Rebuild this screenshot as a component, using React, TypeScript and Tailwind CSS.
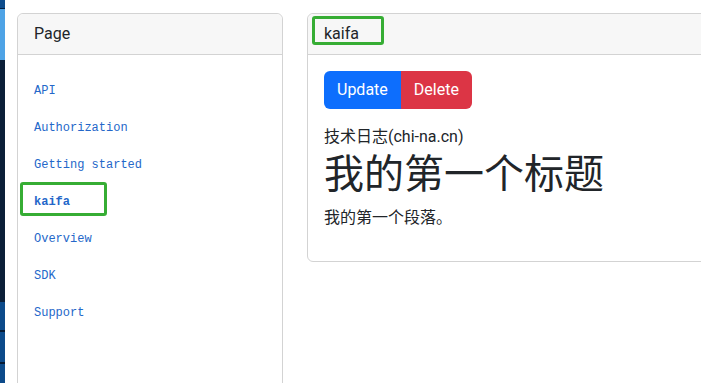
import React from "react";

const links = ["API", "Authorization", "Getting started", "kaifa", "Overview", "SDK", "Support"];

export default function App() {
  return (
    <div
      className="flex h-[383px] w-[701px] overflow-hidden bg-white text-[#212529]"
      style={{ fontFamily: 'Roboto, "Noto Sans CJK SC", sans-serif' }}
    >
      <div className="flex w-[5px] shrink-0 flex-col">
        <div className="h-[8px] bg-[#0d4c8c]" />
        <div className="h-[1px] bg-[#062040]" />
        <div className="h-[51px] bg-[#4ea3e6]" />
        <div className="h-[242px] bg-[#0b1f38]" />
        <div className="h-[28px] bg-[#0c4a8a]" />
        <div className="h-[2px] bg-[#061a33]" />
        <div className="h-[30px] bg-[#0c4a8a]" />
        <div className="h-[2px] bg-[#061a33]" />
        <div className="flex-1 bg-[#0c4a8a]" />
      </div>
      <div className="flex flex-1 gap-[24px] pl-[12px] pt-[13px]">
        <div className="relative w-[266px] shrink-0 self-start h-[420px] rounded-[6px] border border-[#d3d3d3]">
          <div className="rounded-t-[6px] border-b border-[#d3d3d3] bg-[#f7f7f7] px-[16px] py-[8px] text-[16px] leading-[24px]">
            Page
          </div>
          <div className="flex flex-col px-[16px] pt-[17px]">
            {links.map((l) => (
              <div
                key={l}
                className={`flex h-[37px] items-center text-[12px] text-[#2467c9] ${l === "kaifa" ? "font-bold" : ""}`}
                style={{ fontFamily: '"Liberation Mono", monospace' }}
              >
                {l}
              </div>
            ))}
          </div>
          <div className="absolute left-[2px] top-[168px] h-[34px] w-[87px] rounded-[3px] border-[3px] border-[#36ad34]" />
        </div>
        <div className="relative w-[420px] shrink-0 self-start rounded-[6px] border border-[#d3d3d3]">
          <div className="rounded-t-[6px] border-b border-[#d3d3d3] bg-[#f7f7f7] px-[16px] py-[8px] text-[16px] leading-[24px]">
            kaifa
          </div>
          <div className="px-[16px] pt-[16px] pb-[16px]">
            <div className="flex">
              <button className="h-[38px] rounded-l-[6px] bg-[#0d6efd] px-[13px] text-[16px] text-white">
                Update
              </button>
              <button className="h-[38px] rounded-r-[6px] bg-[#dc3545] px-[13px] text-[16px] text-white">
                Delete
              </button>
            </div>
            <div className="mt-[16px] text-[16px] leading-[24px]">技术日志(chi-na.cn)</div>
            <h1 className="mt-[2px] text-[40px] leading-[48px] font-normal">我的第一个标题</h1>
            <p className="mt-[7px] mb-[15px] text-[16px] leading-[24px]">我的第一个段落。</p>
          </div>
          <div className="absolute left-[4px] top-[2px] h-[29px] w-[72px] rounded-[3px] border-[3px] border-[#36ad34]" />
        </div>
      </div>
    </div>
  );
}
